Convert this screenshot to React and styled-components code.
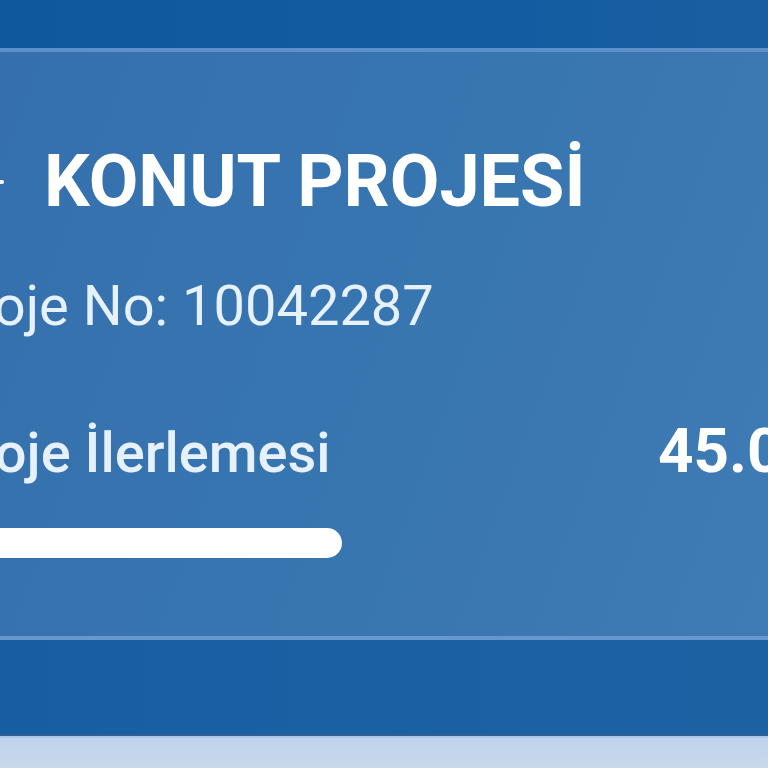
import React from "react";
import styled, { createGlobalStyle } from "styled-components";

const Global = createGlobalStyle`
  html, body { margin: 0; padding: 0; background: #c4d7eb; }
  body { width: 768px; height: 768px; overflow: hidden; font-family: Roboto, "Noto Sans", sans-serif; }
`;

const Page = styled.div`
  width: 768px;
  height: 768px;
  display: flex;
  flex-direction: column;
  overflow: hidden;
`;

const TopBar = styled.div`
  height: 48px;
  flex: none;
  background: linear-gradient(90deg, #10589e 0%, #135ca2 60%, #195ea0 100%);
`;

const Card = styled.section`
  flex: none;
  height: 584px;
  border-top: 4px solid #5c90ca;
  border-bottom: 4px solid #6698cf;
  background: linear-gradient(110deg, #3570ad 0%, #3775b0 45%, #3f7bb5 100%);
  overflow: hidden;
`;

const Inner = styled.div`
  margin-left: -60px;
  width: 924px;
  padding-top: 94px;
  display: flex;
  flex-direction: column;
`;

const TitleRow = styled.div`
  display: flex;
  align-items: center;
  gap: 40px;
`;

const Title = styled.h1`
  margin: 0;
  font-size: 72px;
  line-height: 72px;
  font-weight: 700;
  color: #ffffff;
`;

const ProjectNo = styled.div`
  margin-top: 60px;
  font-size: 56px;
  line-height: 56px;
  font-weight: 400;
  color: #e6f1fb;
`;

const ProgressHead = styled.div`
  margin-top: 86px;
  display: flex;
  justify-content: space-between;
  align-items: baseline;
`;

const ProgressLabel = styled.span`
  font-size: 56px;
  line-height: 56px;
  font-weight: 500;
  color: #e6f1fb;
`;

const ProgressValue = styled.span`
  font-size: 62px;
  line-height: 62px;
  font-weight: 700;
  color: #ffffff;
`;

const Track = styled.div`
  margin-top: 46px;
  margin-right: 31px;
  height: 30px;
  border-radius: 15px;
  background: transparent;
  overflow: hidden;
`;

const Fill = styled.div`
  height: 100%;
  border-radius: 15px;
  background: #ffffff;
`;

const BottomBar = styled.div`
  flex: none;
  height: 94px;
  background: linear-gradient(90deg, #175da2 0%, #1a61a4 50%, #1c62a3 100%);
  border-bottom: 2px solid #2f5f93;
`;

const LightBand = styled.div`
  flex: 1;
  border-top: 2px solid #a9c9ea;
  background: linear-gradient(180deg, #bed3ea 0%, #c8d9ea 100%);
`;

const PlusIcon = () => (
  <svg width="64" height="64" viewBox="0 0 64 64" fill="none" stroke="#ffffff" strokeWidth="4" strokeLinecap="round">
    <path d="M32 8 V56" />
    <path d="M8 32 H62" />
  </svg>
);

export default function App() {
  const progress = 45;
  return (
    <>
      <Global />
      <Page>
        <TopBar />
        <Card>
          <Inner>
            <TitleRow>
              <PlusIcon />
              <Title>KONUT PROJESİ</Title>
            </TitleRow>
            <ProjectNo>Proje No: 10042287</ProjectNo>
            <ProgressHead>
              <ProgressLabel>Proje İlerlemesi</ProgressLabel>
              <ProgressValue>45.00%</ProgressValue>
            </ProgressHead>
            <Track>
              <Fill style={{ width: `${progress}%` }} />
            </Track>
          </Inner>
        </Card>
        <BottomBar />
        <LightBand />
      </Page>
    </>
  );
}
